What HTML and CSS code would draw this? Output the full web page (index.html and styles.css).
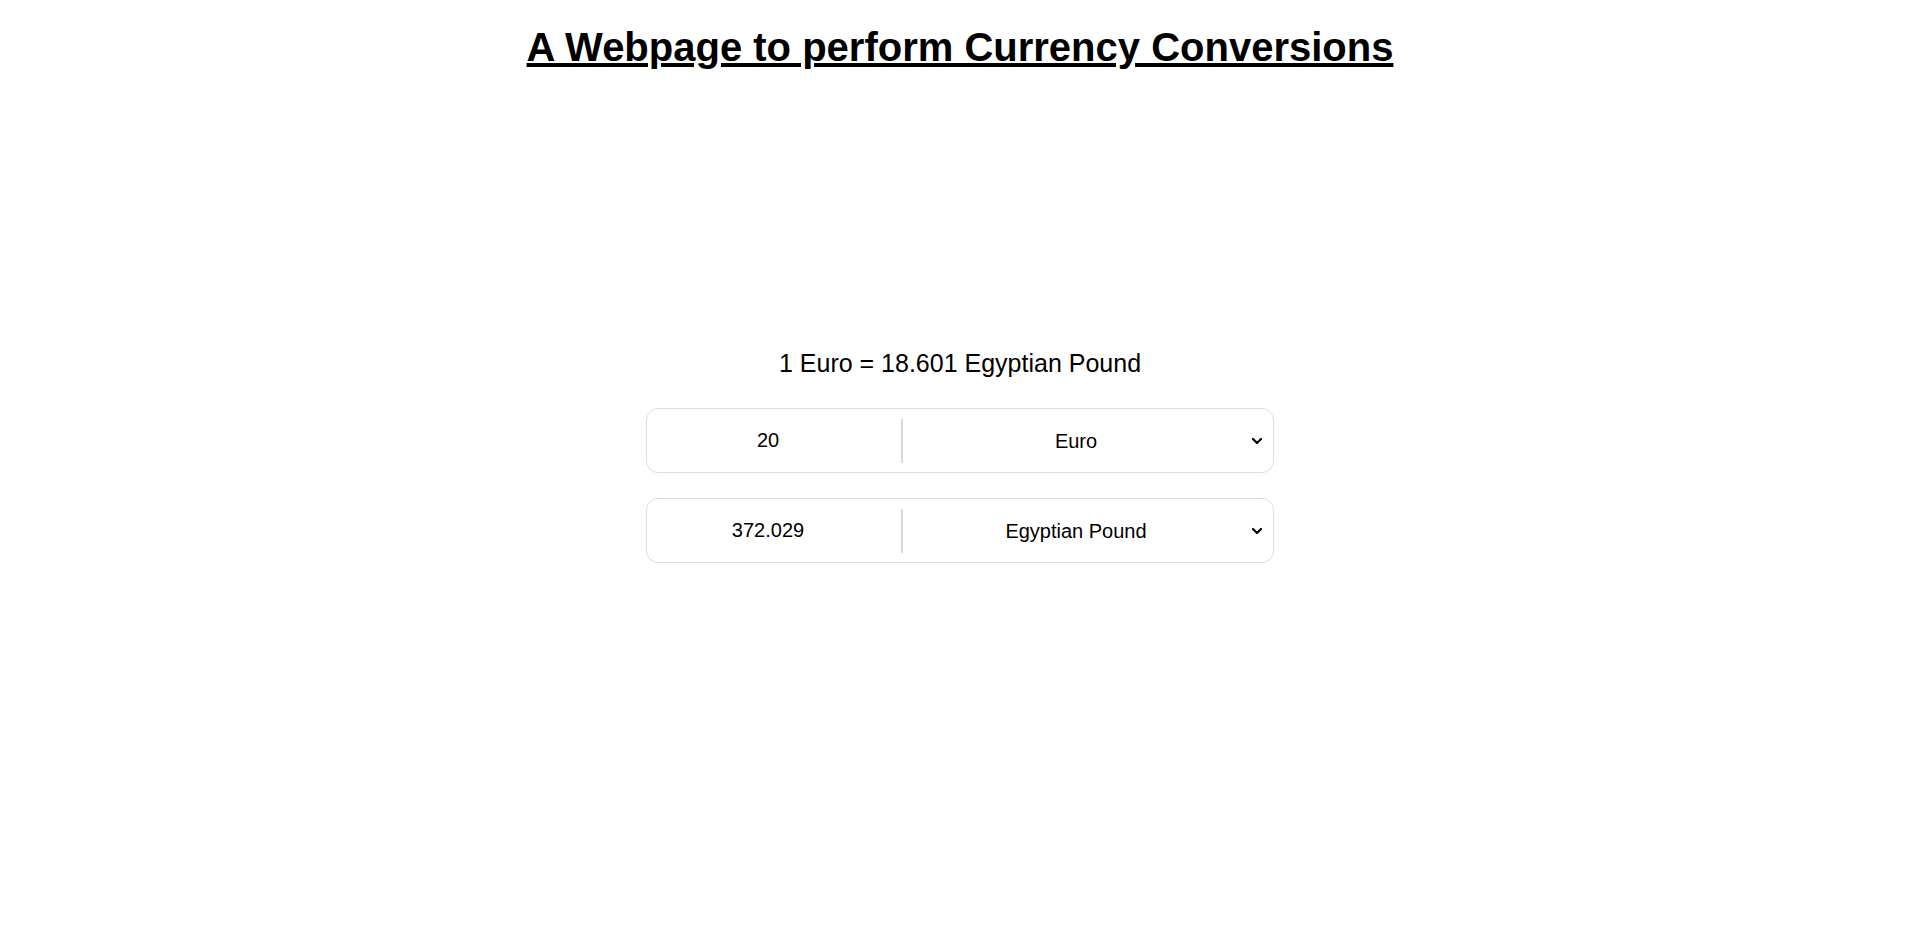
FILE: index.html
```html
<!DOCTYPE html>
<html lang="en">
<head>
<meta charset="utf-8">
<title>Currency Converter</title>
<link rel="stylesheet" href="styles.css">
</head>
<body>
<h1 class="title">A Webpage to perform Currency Conversions</h1>
<main class="converter">
  <p class="rate">1 Euro = 18.601 Egyptian Pound</p>
  <div class="row">
    <input class="amount" type="text" value="20">
    <span class="divider"></span>
    <div class="select-wrap">
      <select class="currency">
        <option selected>Euro</option>
        <option>Egyptian Pound</option>
        <option>US Dollar</option>
      </select>
      <svg class="chevron" viewBox="0 0 12 12" width="12" height="12" aria-hidden="true"><path d="M2 4 L6 8 L10 4" fill="none" stroke="#000" stroke-width="2.2" stroke-linecap="round" stroke-linejoin="round"/></svg>
    </div>
  </div>
  <div class="row">
    <input class="amount" type="text" value="372.029">
    <span class="divider"></span>
    <div class="select-wrap">
      <select class="currency">
        <option>Euro</option>
        <option selected>Egyptian Pound</option>
        <option>US Dollar</option>
      </select>
      <svg class="chevron" viewBox="0 0 12 12" width="12" height="12" aria-hidden="true"><path d="M2 4 L6 8 L10 4" fill="none" stroke="#000" stroke-width="2.2" stroke-linecap="round" stroke-linejoin="round"/></svg>
    </div>
  </div>
</main>
</body>
</html>
```

FILE: styles.css
```css
html, body {
  margin: 0;
  padding: 0;
  background: #ffffff;
  color: #000000;
  font-family: "Liberation Sans", Arial, sans-serif;
}

.title {
  margin: 25px 0 0;
  font-size: 40px;
  font-weight: bold;
  text-align: center;
  text-decoration: underline;
}

.converter {
  display: flex;
  flex-direction: column;
  align-items: center;
  padding-top: 279px;
}

.rate {
  margin: 0 0 31px;
  font-size: 25px;
  line-height: 28px;
}

.row {
  box-sizing: border-box;
  width: 628px;
  height: 65px;
  margin-bottom: 25px;
  display: flex;
  align-items: center;
  border: 1px solid #dedede;
  border-radius: 12px;
}

.amount {
  box-sizing: border-box;
  width: 242px;
  margin-right: 12px;
  padding: 0;
  border: none;
  outline: none;
  background: transparent;
  font-family: "Liberation Sans", Arial, sans-serif;
  font-size: 20px;
  color: #000;
  text-align: center;
}

.divider {
  width: 2px;
  height: 44px;
  background: #d9d9d9;
  flex: none;
}

.select-wrap {
  position: relative;
  flex: 1;
  display: flex;
  align-items: center;
}

.currency {
  flex: 1;
  height: 40px;
  padding: 0 24px 0 0;
  border: none;
  outline: none;
  background: transparent;
  appearance: none;
  -webkit-appearance: none;
  font-family: "Liberation Sans", Arial, sans-serif;
  font-size: 20px;
  color: #000;
  text-align: center;
  text-align-last: center;
}

.chevron {
  position: absolute;
  right: 10px;
  top: 50%;
  margin-top: -6px;
  pointer-events: none;
}
```
